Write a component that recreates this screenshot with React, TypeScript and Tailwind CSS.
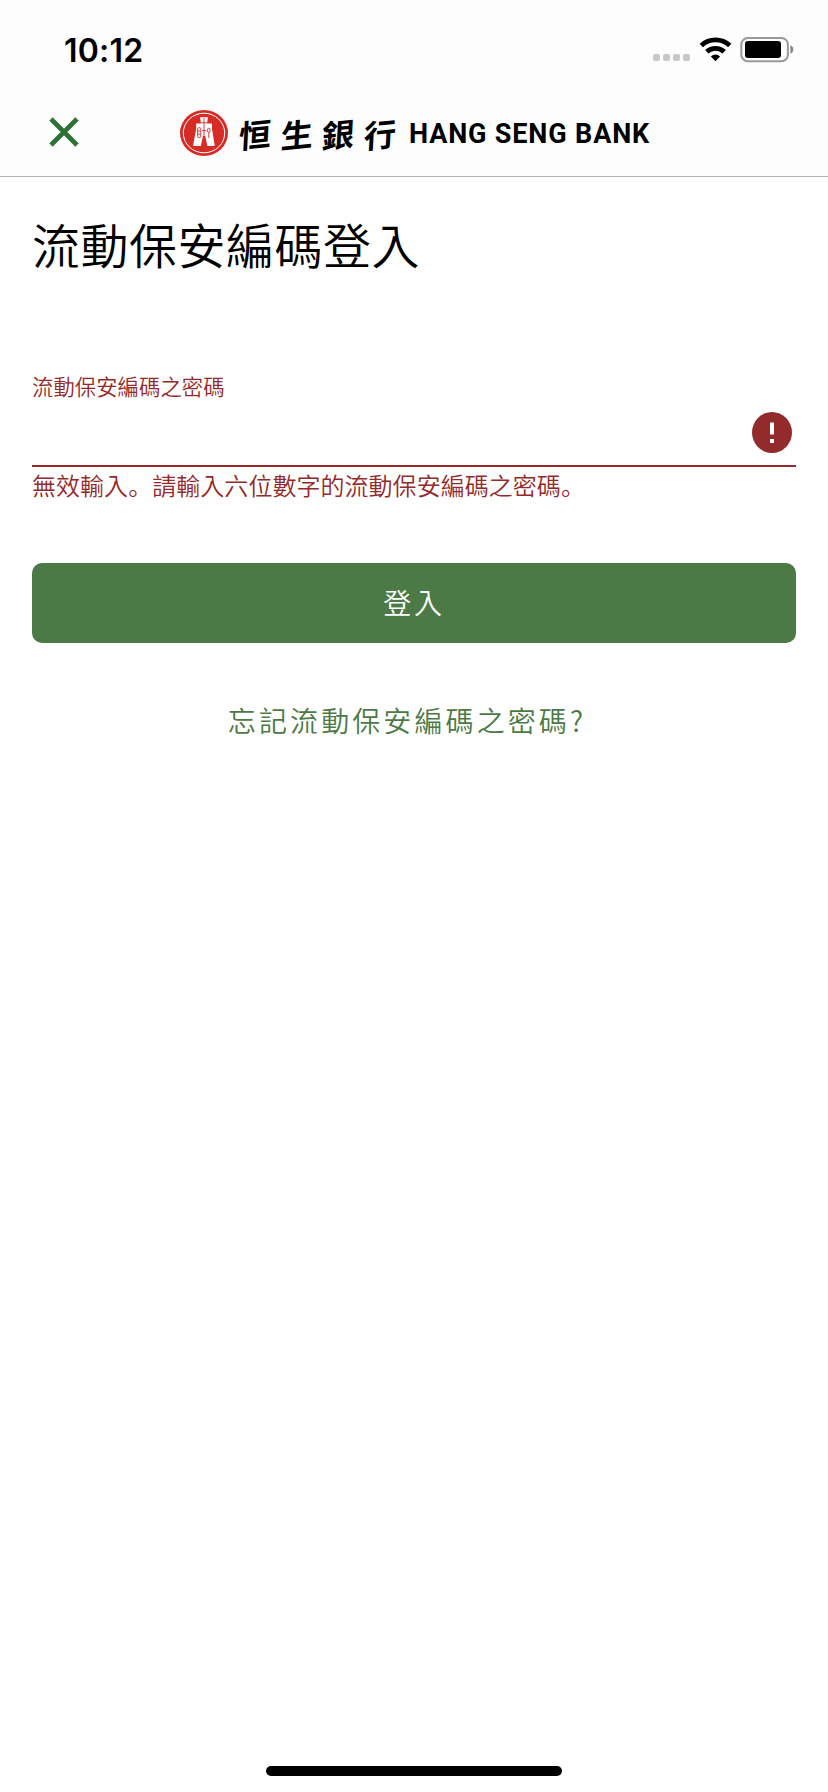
function StatusBar() {
  return (
    <div className="flex h-[100px] items-start justify-between pl-[64px] pr-[33px]">
      <div className="mt-[35px] font-[Inter] text-[32px] leading-[32px] font-semibold tracking-[0.2px] text-black">10:12</div>
      <svg className="mt-[36px] h-[28px] w-[143px]" viewBox="0 0 143 28">
        <g fill="#c8c8c8">
          <rect x="1" y="18" width="7" height="7" rx="2" />
          <rect x="11" y="18" width="7" height="7" rx="2" />
          <rect x="21" y="18" width="7" height="7" rx="2" />
          <rect x="31" y="18" width="7" height="7" rx="2" />
        </g>
        <g fill="none" stroke="#000" strokeWidth="4.8">
          <path d="M49.3 9.6A20.5 20.5 0 0 1 77.7 9.6" />
          <path d="M54.8 15.8A12.6 12.6 0 0 1 72.2 15.8" />
        </g>
        <path d="M63.5 25.2L58.9 20.4A6.6 6.6 0 0 1 68.1 20.4Z" fill="#000" />
        <rect x="89.3" y="2" width="46.6" height="23.2" rx="6.5" fill="none" stroke="#999" strokeWidth="2" />
        <rect x="93" y="5" width="36" height="17" rx="3" fill="#000" />
        <path d="M138.3 9.3Q141.3 10.5 141.3 13.5T138.3 17.7Z" fill="#888" />
      </svg>
    </div>
  );
}

function Emblem() {
  return (
    <svg className="h-[46px] w-[48px] shrink-0" viewBox="0 0 48 46">
      <ellipse cx="24" cy="23" rx="24" ry="23" fill="#d72c26" />
      <ellipse cx="24" cy="23" rx="20.7" ry="19.8" fill="none" stroke="#fff" strokeWidth="1" />
      <path d="M20 7.2H28L27 13.6H32V19L34.8 36H27.4L25.2 26H23L20.8 36H13L16.2 19V13.6H21Z" fill="#fff" />
      <g fill="none" stroke="#d72c26" strokeWidth="0.9">
        <path d="M24 8V26M21 12.8H27M22.2 20.6H26.4" />
        <rect x="17.6" y="17.8" width="3.2" height="9.6" rx="0.8" />
        <path d="M17.6 21H20.8M17.6 24.2H20.8M28.8 22.6V28" />
        <ellipse cx="28.8" cy="20.4" rx="1.4" ry="2.2" />
      </g>
    </svg>
  );
}

function Header() {
  return (
    <div className="flex h-[76px] items-start pl-[49px]">
      <svg className="mt-[17px] h-[30px] w-[30px] shrink-0" viewBox="0 0 30 30">
        <path d="M2 2L28 28M28 2L2 28" stroke="#2f7036" strokeWidth="4.6" />
      </svg>
      <div className="ml-[101px] mt-[10px] flex h-[46px] items-center">
        <Emblem />
        <div className="ml-[11px] flex w-[170px] shrink-0 gap-[9.5px] font-['Noto_Sans_CJK_TC',sans-serif] text-[32px] leading-[44px] font-semibold text-black">
          {['恒', '生', '銀', '行'].map((character) => (
            <span key={character} className="-skew-x-3 -skew-y-6">{character}</span>
          ))}
        </div>
        <div className="mt-[2px] font-[Roboto] text-[27px] leading-[46px] font-bold tracking-[0.85px] whitespace-nowrap text-black">HANG SENG BANK</div>
      </div>
    </div>
  );
}

function FullStop() {
  return <span className="font-['Noto_Sans_CJK_SC',sans-serif]">。</span>;
}

export default function App() {
  return (
    <div className="flex h-[1792px] w-[828px] flex-col bg-white font-['Noto_Sans_CJK_TC',sans-serif]">
      <header className="h-[177px] shrink-0 border-b border-[#b2b2b2] bg-[#fdfdfd]">
        <StatusBar />
        <Header />
      </header>
      <main className="flex grow flex-col px-8">
        <h1 className="mt-[30px] text-[48px] leading-[72px] font-[350] tracking-[0.5px] text-black">流動保安編碼登入</h1>
        <label className="mt-[91px] text-[21.3px] leading-[32px] font-[350] tracking-[0.1px] text-[#932a2b]">流動保安編碼之密碼</label>
        <div className="flex h-[65px] items-start justify-end border-b-2 border-[#932a2b] pr-1">
          <svg className="mt-[10px] h-[41px] w-[40px]" viewBox="0 0 40 41">
            <ellipse cx="20" cy="20.5" rx="20" ry="20.5" fill="#932a2b" />
            <path d="M18 10.5H22V22.5H18ZM18 27H22V31H18Z" fill="#fff" />
          </svg>
        </div>
        <p className="h-[36px] text-[24px] leading-[36px] font-[350] tracking-[0.04px] text-[#932a2b]">無效輸入<FullStop />請輸入六位數字的流動保安編碼之密碼<FullStop /></p>
        <button className="mt-[60px] h-[80px] rounded-[10px] bg-[#4c7a46] pb-[3px] text-[28px] leading-[42px] font-[350] tracking-[2.8px] text-white">登入</button>
        <a className="mt-[56px] self-center pr-[14px] text-[28px] leading-[42px] font-[350] tracking-[3.1px] text-[#4c7a46]">忘記流動保安編碼之密碼?</a>
      </main>
      <footer className="flex h-[26px] shrink-0 justify-center">
        <div className="h-[10px] w-[296px] rounded-full bg-black" />
      </footer>
    </div>
  );
}
